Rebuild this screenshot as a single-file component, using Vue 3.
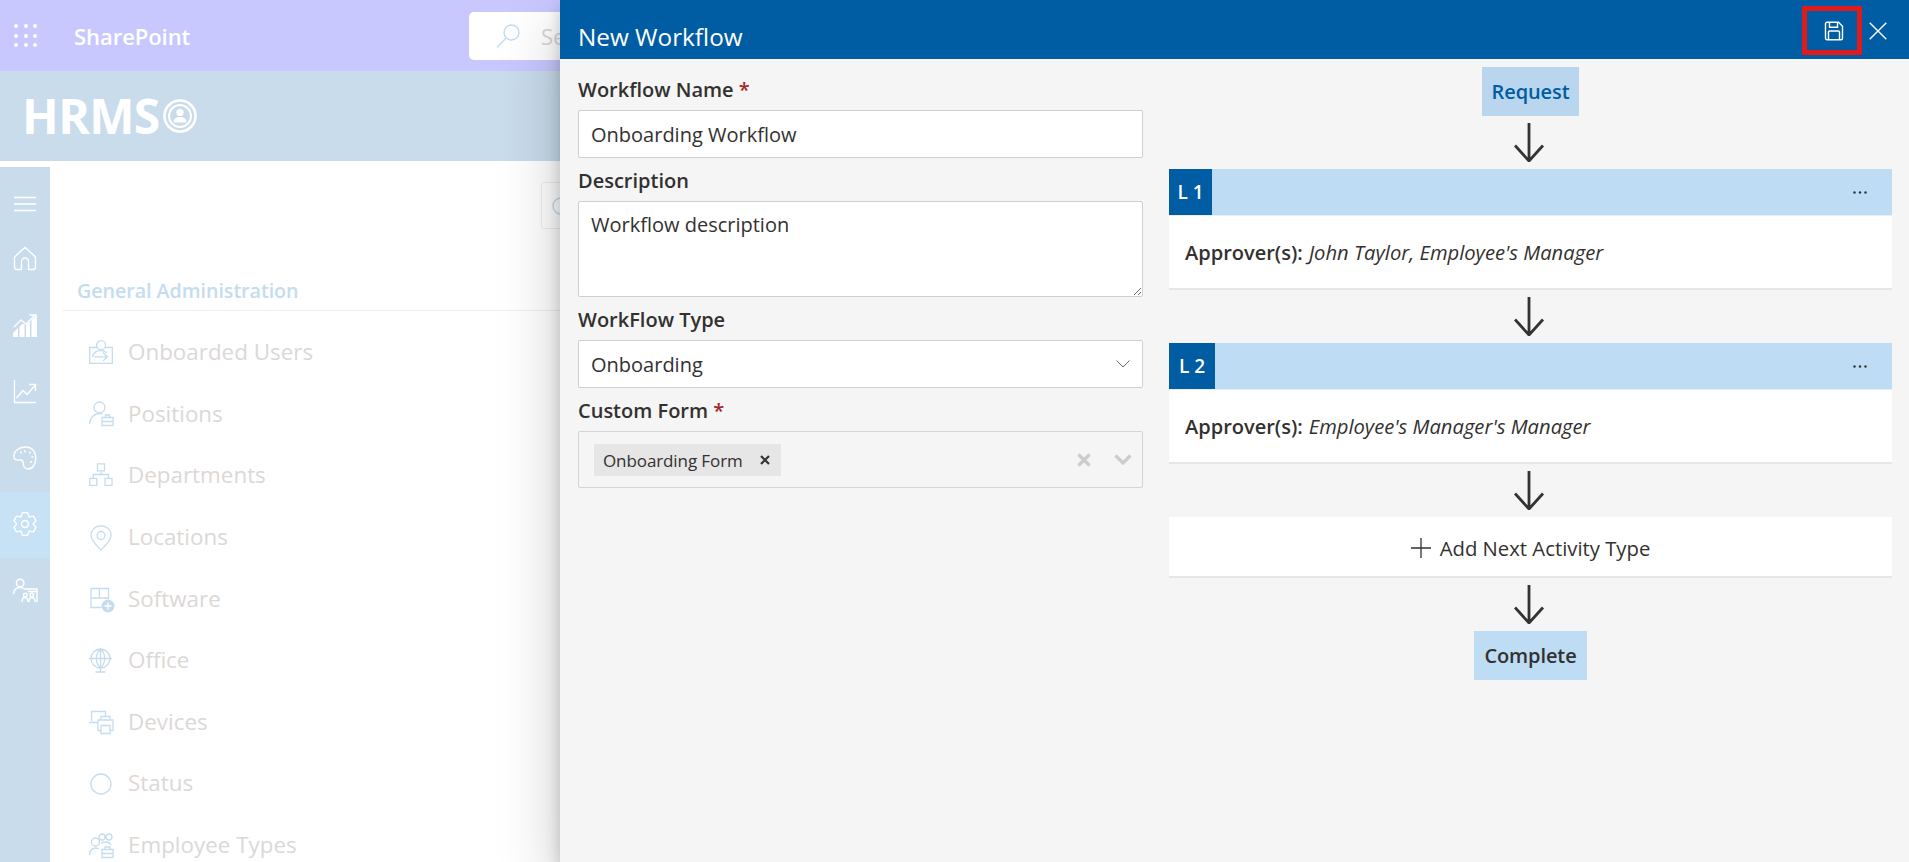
<template>
  <div class="page">
    <header class="suite-bar">
      <div class="waffle">
        <span v-for="n in 9" :key="n" class="waffle-dot"></span>
      </div>
      <span class="suite-name">SharePoint</span>
      <div class="suite-search">
        <svg class="suite-search-icon" viewBox="0 0 24 24" fill="none">
          <circle cx="15.5" cy="8.5" r="7.5" />
          <path d="M10 14 1 23.5" />
        </svg>
        <span class="suite-search-text">Se</span>
      </div>
    </header>

    <div class="brand">
      <span class="brand-name">HRMS</span>
      <svg class="brand-icon" viewBox="0 0 34 34">
        <circle cx="17" cy="17" r="15.5" fill="none" stroke="#fff" stroke-width="2.6" />
        <circle cx="17" cy="17" r="11" fill="none" stroke="#fff" stroke-width="2" />
        <circle cx="17" cy="13.5" r="3.6" fill="#fff" />
        <path d="M10.5 23.5c0-4 3-5.5 6.5-5.5s6.5 1.500 6.500 5.500z" fill="#fff" />
      </svg>
    </div>

    <div class="main">
      <nav class="rail">
        <div class="rail-menu">
          <svg class="rail-icon" viewBox="0 0 24 24" fill="none">
            <path d="M1 5.500H23M1 12H23M1 18.500H23" />
          </svg>
        </div>
        <div
          v-for="item in railItems"
          :key="item.name"
          class="rail-item"
          :class="{ active: item.name === 'settings' }"
        >
          <svg class="rail-icon" viewBox="0 0 24 24" fill="none">
            <path :d="item.d" />
            <path v-if="item.fill" class="solid" :d="item.fill" />
          </svg>
        </div>
      </nav>

      <div class="content">
        <div class="content-search">
          <svg class="content-search-icon" viewBox="0 0 20 20" fill="none">
            <circle cx="10" cy="10" r="8" />
          </svg>
        </div>
        <h2 class="section-title">General Administration</h2>
        <ul class="admin-list">
          <li v-for="item in adminItems" :key="item.label" class="admin-item">
            <svg class="admin-icon" viewBox="0 0 24 24" fill="none">
              <path :d="item.d" />
              <path v-if="item.fill" class="solid" :d="item.fill" />
              <path v-if="item.plus" class="plus" :d="item.plus" />
            </svg>
            <span>{{ item.label }}</span>
          </li>
        </ul>
      </div>
    </div>

    <aside class="panel">
      <div class="panel-header">
        <span class="panel-title">New Workflow</span>
        <div class="panel-actions">
          <button class="save-btn" type="button" aria-label="Save">
            <svg viewBox="0 0 20 20" fill="none">
              <path d="M1.500 2.800a1.500 1.500 0 0 1 1.500-1.500h11.500l4 4v12a1.500 1.500 0 0 1-1.500 1.500H3a1.500 1.500 0 0 1-1.500-1.500z" />
              <path d="M5.500 1.500v4.800h8V1.500M4.500 18.500v-7.500a1 1 0 0 1 1-1h9a1 1 0 0 1 1 1v7.500" />
            </svg>
          </button>
          <button class="close-btn" type="button" aria-label="Close">
            <svg viewBox="0 0 18 18" fill="none">
              <path d="M.7.700 17.300 17.300M17.300.700.7 17.300" />
            </svg>
          </button>
        </div>
      </div>

      <div class="panel-body">
        <form class="form" @submit.prevent>
          <div class="field">
            <label>Workflow Name <span class="req">*</span></label>
            <input v-model="workflowName" class="control" type="text" />
          </div>
          <div class="field">
            <label>Description</label>
            <textarea v-model="description" class="control area"></textarea>
          </div>
          <div class="field">
            <label>WorkFlow Type</label>
            <div class="control select">
              <span>Onboarding</span>
              <svg class="chevron" viewBox="0 0 14 8" fill="none">
                <path d="M.5.500 7 7 13.500.500" />
              </svg>
            </div>
          </div>
          <div class="field">
            <label>Custom Form <span class="req">*</span></label>
            <div class="multi">
              <span class="tag">
                Onboarding Form
                <svg class="tag-x" viewBox="0 0 10 10" fill="none">
                  <path d="M1 1 9 9M9 1 1 9" />
                </svg>
              </span>
              <svg class="multi-clear" viewBox="0 0 14 14" fill="none">
                <path d="M1.500 1.500 12.500 12.500M12.500 1.500 1.500 12.500" />
              </svg>
              <svg class="multi-chevron" viewBox="0 0 18 11" fill="none">
                <path d="M1.500 1.500 9 9 16.500 1.500" />
              </svg>
            </div>
          </div>
        </form>

        <div class="flow">
          <div class="node request">Request</div>
          <template v-for="level in levels" :key="level.code">
            <svg class="arrow" viewBox="0 0 33 39" fill="none">
              <path d="M15 0V37.500M1 22.500 15 38 29 22.500" />
            </svg>
            <div class="level">
              <div class="level-head">
                <span class="level-code" :style="{ width: level.badge + 'px' }">{{ level.code }}</span>
                <svg class="more" viewBox="0 0 14 3">
                  <circle cx="1.500" cy="1.500" r="1.200" />
                  <circle cx="7" cy="1.500" r="1.200" />
                  <circle cx="12.500" cy="1.500" r="1.200" />
                </svg>
              </div>
              <div class="level-body">
                <strong>Approver(s):</strong> <em>{{ level.approvers }}</em>
              </div>
            </div>
          </template>
          <svg class="arrow" viewBox="0 0 33 39" fill="none">
            <path d="M15 0V37.500M1 22.500 15 38 29 22.500" />
          </svg>
          <div class="add-next">
            <svg viewBox="0 0 20 20" fill="none">
              <path d="M10 0V20M0 10H20" />
            </svg>
            <span>Add Next Activity Type</span>
          </div>
          <svg class="arrow" viewBox="0 0 33 39" fill="none">
            <path d="M15 0V37.500M1 22.500 15 38 29 22.500" />
          </svg>
          <div class="node complete">Complete</div>
        </div>
      </div>
    </aside>
  </div>
</template>

<script setup>
import { ref } from 'vue'

const workflowName = ref('Onboarding Workflow')
const description = ref('Workflow description')

const levels = [
  { code: 'L 1', badge: 43, approvers: "John Taylor, Employee's Manager" },
  { code: 'L 2', badge: 46, approvers: "Employee's Manager's Manager" }
]

// six toothed outline for the settings icon
const gearPath = () => {
  const pts = []
  for (let k = 0; k < 6; k++) {
    const a = k * 60 - 90
    for (const [off, r] of [[-30, 8.2], [-13, 11.5], [13, 11.5]]) {
      const rad = ((a + off) * Math.PI) / 180
      pts.push((12 + r * Math.cos(rad)).toFixed(2) + ' ' + (12 + r * Math.sin(rad)).toFixed(2))
    }
  }
  return 'M' + pts.join('L') + 'Z'
}

const railItems = [
  { name: 'home', d: 'M1.500 9 12 -.7l10.500 9.700v10a2.500 2.500 0 0 1-2.500 2.500h-4.500v-8a3.500 3.500 0 0 0-7 0v8H4a2.500 2.500 0 0 1-2.500-2.500z' },
  {
    name: 'reports',
    d: 'M1 13 8 6l5 4 9-9M16.500 1H23v6.500',
    fill: 'M0 23v-4l5-5v9zM6.500 23V12.500L10 9.500l1.500 1V23zM13 23V11l4-3.500V23zM18.500 23V6L24 1v22z'
  },
  { name: 'analytics', d: 'M1.500 0V22.500H23M3.500 18 10 10.500l4 4 8-9M16 4.500h6.500V11' },
  {
    name: 'themes',
    d: 'M12.500 1C6 1 .8 5 .8 10.500c0 3.500 3 3.800 5 3.500 3-.5 4.500 1 4.500 3.500 0 3 2 5.500 5 5.500 4.500 0 7.500-5 7.500-11S19.500 1 12.500 1z',
    fill: 'M11 4.500h1.800v1.800H11zM16 5.800h1.800v1.800H16zM18.500 10h1.800v1.800h-1.800zM17 15h1.800v1.800H17zM7 5.500h1.800v1.800H7z'
  },
  { name: 'settings', d: gearPath() + 'M15.500 12a3.500 3.500 0 1 1-7 0a3.500 3.500 0 1 1 7 0z' },
  {
    name: 'people',
    d: 'M11 5a3.800 3.800 0 1 1-7.600 0a3.800 3.800 0 1 1 7.600 0zM.5 16c.5-4 3-6.500 6.500-6.500 1.500 0 3 .5 4.500 1.500H24v12.500h-1M9 24c0-3 1-4.500 3-4.500s3 1.500 3 4.500M16 24c0-3 1-4.500 3-4.500s3 1.500 3 4.500M10.500 17a1.800 1.800 0 1 0 3.600 0a1.800 1.800 0 1 0-3.600 0M17 17a1.800 1.800 0 1 0 3.600 0a1.800 1.800 0 1 0-3.600 0M15 13.500h9'
  }
]

const adminItems = [
  {
    label: 'Onboarded Users',
    d: 'M7.500 7.500H.7V23.300H23.300V7.500H16.500M12 .7a4.500 4.500 0 1 0 0 9a4.500 4.500 0 0 0 0-9zM3.500 17c1-4.500 4-6.500 8.500-6.500 2.500 0 4.500 1 6 2.500M5.500 16.800H18M14 12.500l4.300 4.300-4.300 4.300'
  },
  {
    label: 'Positions',
    d: 'M16 6.500a5.500 5.500 0 1 1-11 0a5.500 5.500 0 1 1 11 0zM.5 23c.5-6 4.500-10.500 10-10.500 1 0 2 .2 3 .5M13 16.500H24V24.500H13zM16.500 16.500V14h4v2.500M13 20.500H24'
  },
  {
    label: 'Departments',
    d: 'M8.500.8H15.500V7.800H8.500zM.8 15.300H7.800V22.300H.8zM16 15.300H23V22.300H16zM12 7.800V11.500M4.300 15.300V11.500H19.500V15.300'
  },
  {
    label: 'Locations',
    d: 'M12 .8C6 .8 2 5 2 10.500c0 5 5.500 10 10 14.500 4.500-4.500 10-9.500 10-14.500C22 5 18 .8 12 .8zM16 10.500a4 4 0 1 1-8 0a4 4 0 1 1 8 0z'
  },
  {
    label: 'Software',
    d: 'M19.500 13V2.500H2V21.500H12.500M2 12H19.500M10.500 2.500V12',
    fill: 'M25.500 20a6.500 6.500 0 1 1-13 0a6.500 6.500 0 1 1 13 0z',
    plus: 'M19 16.500V23.500M15.500 20H22.500'
  },
  {
    label: 'Office',
    d: 'M21 10.500a9.500 9.500 0 1 1-19 0a9.500 9.500 0 1 1 19 0zM11.500 0V24M0 10.500H23M11.500 1C6 6 6 15 11.500 20M11.500 1C17 6 17 15 11.500 20M6.500 24H16.500'
  },
  {
    label: 'Devices',
    d: 'M2.500 12V2.500H16.500V7M0 13.500H9.500M12 11V7.500H21V11M9 21.500V11H24V21.500H21M12 16.500H21V24.500H12zM9 21.500H12'
  },
  {
    label: 'Status',
    d: 'M22 13a10 10 0 1 1-20 0a10 10 0 1 1 20 0z'
  },
  {
    label: 'Employee Types',
    d: 'M10.500 9a4 4 0 1 1-8 0a4 4 0 1 1 8 0zM.5 22c.3-4 2.500-7 6-7 1 0 2 .3 3 .8M16 4a3 3 0 1 1-6 0a3 3 0 1 1 6 0zM23 4a3 3 0 1 1-6 0a3 3 0 1 1 6 0zM13 16.500H24V24.500H13zM16 16.500V14h5v2.500M13 20.500H24M12.500 10.500c.5-1 2-1.500 4.500-1.500s4 1 5 3'
  }
]
</script>

<style>
html,
body {
  margin: 0;
  padding: 0;
  overflow: hidden;
}
</style>

<style scoped>
.page {
  position: relative;
  width: 100%;
  height: 100vh;
  overflow: hidden;
  background: #fff;
  font-family: "Open Sans", "Noto Sans", sans-serif;
  color: #323130;
}

/* suite bar */
.suite-bar {
  display: flex;
  align-items: center;
  height: 71px;
  background: #c8c8ff;
}

.waffle {
  display: grid;
  grid-template-columns: repeat(3, 4px);
  gap: 5.5px;
  margin-left: 14px;
  width: 24px;
}

.waffle-dot {
  width: 4px;
  height: 4px;
  border-radius: 50%;
  background: #fff;
}

.suite-name {
  flex: 0 0 118px;
  margin: 1px 0 0 36px;
  font-size: 22px;
  font-weight: 600;
  letter-spacing: -0.05px;
  white-space: nowrap;
  color: #fff;
}

.suite-search {
  flex: none;
  display: flex;
  align-items: center;
  box-sizing: border-box;
  width: 91px;
  height: 48px;
  margin-left: 277px;
  padding-left: 27px;
  overflow: hidden;
  border-radius: 5px 0 0 5px;
  background: #fff;
}

.suite-search-icon {
  flex: none;
  width: 24px;
  height: 24px;
  stroke: #c5dcef;
  stroke-width: 1.4;
}

.suite-search-text {
  margin-left: 21px;
  font-size: 22px;
  color: #d8d4d2;
}

/* site header */
.brand {
  display: flex;
  align-items: center;
  height: 90px;
  padding-left: 22px;
  background: #c9dcec;
}

.brand-name {
  font-size: 48px;
  font-weight: 700;
  letter-spacing: -0.6px;
  line-height: 1;
  color: #fff;
}

.brand-icon {
  width: 34px;
  height: 34px;
  margin-left: 3px;
}

.main {
  display: flex;
  height: calc(100vh - 161px);
}

/* left rail */
.rail {
  flex: 0 0 50px;
  margin-top: 6px;
  padding-top: 10px;
  background: #c9dcec;
}

.rail-menu,
.rail-item {
  display: flex;
  align-items: center;
  justify-content: center;
}

.rail-menu {
  height: 51px;
}

.rail-menu .rail-icon {
  margin-top: 3px;
}

.rail-item {
  height: 66px;
}

.rail-item .rail-icon {
  margin-bottom: 2px;
}

.rail-item.active {
  background: #c7e1f5;
}

.rail-icon {
  width: 24px;
  height: 24px;
  overflow: visible;
  stroke: #fff;
  stroke-width: 1.4;
  stroke-linejoin: round;
}

.rail-icon .solid {
  fill: #fff;
  stroke: none;
}

/* page behind the panel */
.content {
  flex: 1;
  min-width: 0;
  margin-top: 6px;
  padding: 15px 0 0 12px;
}

.content-search {
  display: flex;
  align-items: center;
  width: 300px;
  height: 45px;
  margin-left: 479px;
  padding-left: 9px;
  border: 1px solid #eeeeee;
  border-radius: 3px;
}

.content-search-icon {
  width: 20px;
  height: 20px;
  stroke: #c5dcef;
  stroke-width: 1.5;
}

.section-title {
  margin: 45px 0 0;
  padding: 0 0 3px 15px;
  border-bottom: 1px solid #f0f0f0;
  font-size: 19.700px;
  font-weight: 600;
  line-height: 33px;
  letter-spacing: -0.05px;
  color: #c5dcef;
}

.admin-list {
  margin: 0;
  padding: 10px 0 0 27px;
  list-style: none;
}

.admin-item {
  display: flex;
  align-items: center;
  gap: 15px;
  height: 61.600px;
  font-size: 22.400px;
  color: #dcd8d6;
}

.admin-icon {
  flex: 0 0 24px;
  width: 24px;
  height: 24px;
  overflow: visible;
  stroke: #c5dcef;
  stroke-width: 1.3;
}

.admin-icon .solid {
  fill: #c5dcef;
  stroke: none;
}

.admin-icon .plus {
  stroke: #fff;
}

/* workflow panel */
.panel {
  position: absolute;
  top: 0;
  right: 0;
  bottom: 0;
  left: 560px;
  background: #f5f5f5;
  box-shadow: 0 25.600px 57.600px 0 rgba(0, 0, 0, 0.22), 0 4.800px 14.400px 0 rgba(0, 0, 0, 0.18);
}

.panel-header {
  display: flex;
  align-items: center;
  justify-content: space-between;
  height: 59px;
  padding: 0 15px 0 18px;
  background: #005ca3;
}

.panel-title {
  margin-top: 13px;
  font-size: 24.300px;
  color: #fff;
}

.panel-actions {
  display: flex;
  align-items: center;
  padding-top: 2px;
}

.save-btn,
.close-btn {
  display: flex;
  align-items: center;
  justify-content: center;
  padding: 0;
  background: none;
  cursor: pointer;
}

.save-btn {
  width: 60px;
  height: 49px;
  border: 5px solid #e01b1b;
}

.save-btn svg {
  width: 20px;
  height: 20px;
  margin-left: 4px;
  stroke: #fff;
  stroke-width: 1.4;
}

.close-btn {
  width: 32px;
  height: 49px;
  border: none;
}

.close-btn svg {
  width: 18px;
  height: 18px;
  stroke: #fff;
  stroke-width: 1.400;
}

.panel-body {
  display: flex;
  gap: 26px;
  padding: 0 17px 0 18px;
}

.form {
  flex: 0 0 565px;
  padding-top: 19px;
}

.field {
  margin-bottom: 11px;
}

.field label {
  display: block;
  height: 24px;
  margin-bottom: 8px;
  font-size: 20px;
  font-weight: 600;
  line-height: 24px;
}

.req {
  color: #a4262c;
}

.control {
  display: block;
  box-sizing: border-box;
  width: 100%;
  height: 48px;
  padding: 1px 12px 0;
  border: 1.500px solid #cfcfcf;
  border-radius: 2px;
  outline: none;
  background: #fff;
  font-family: inherit;
  font-size: 20px;
  color: #323130;
}

.area {
  height: 96px;
  padding-top: 10px;
  line-height: 26px;
}

.select {
  display: flex;
  align-items: center;
  justify-content: space-between;
  padding-top: 0;
}

.chevron {
  width: 14px;
  height: 8px;
  stroke: #666;
  stroke-width: 1;
}

.multi {
  display: flex;
  align-items: center;
  box-sizing: border-box;
  height: 57px;
  padding: 0 10px 0 15px;
  border: 1.500px solid #d4d4d4;
  border-radius: 2px;
}

.tag {
  display: flex;
  align-items: center;
  justify-content: space-between;
  box-sizing: border-box;
  width: 187px;
  height: 32px;
  padding: 1px 11px 0 9px;
  border-radius: 2px;
  background: #e6e6e6;
  font-size: 17px;
  letter-spacing: -0.1px;
}

.tag-x {
  width: 10px;
  height: 10px;
  stroke: #333;
  stroke-width: 2.200;
}

.multi-clear {
  width: 14px;
  height: 14px;
  margin-left: auto;
  margin-right: 1px;
  stroke: #cccccc;
  stroke-width: 3.200;
}

.multi-chevron {
  width: 18px;
  height: 11px;
  margin-left: 22px;
  stroke: #cccccc;
  stroke-width: 3.200;
}

/* flow */
.flow {
  flex: 1;
  min-width: 0;
  display: flex;
  flex-direction: column;
  align-items: center;
  padding-top: 8px;
}

.node {
  display: flex;
  align-items: center;
  justify-content: center;
  height: 49px;
  font-size: 20px;
  font-weight: 600;
  letter-spacing: -0.1px;
}

.request {
  width: 97px;
  background: #b9d6ee;
  color: #005ca3;
}

.complete {
  width: 113px;
  background: #bedcf4;
}

.arrow {
  flex: none;
  width: 33px;
  height: 39px;
  margin: 7px 0;
  stroke: #333;
  stroke-width: 2.800;
}

.level {
  align-self: stretch;
}

.level-head {
  display: flex;
  align-items: center;
  justify-content: space-between;
  height: 46px;
  padding-right: 25px;
  background: #bedcf4;
}

.level-code {
  display: flex;
  align-items: center;
  justify-content: center;
  align-self: stretch;
  background: #005ca3;
  font-size: 19px;
  font-weight: 600;
  color: #fff;
}

.more {
  width: 14px;
  height: 3px;
  fill: #333;
}

.level-body {
  display: flex;
  align-items: center;
  gap: 6px;
  box-sizing: border-box;
  height: 75px;
  padding-left: 16px;
  border-top: 1px solid #e8eef2;
  border-bottom: 2px solid #e6e6e6;
  background: #fff;
  font-size: 20.200px;
}

.level-body strong {
  font-size: 20px;
  font-weight: 600;
}

.add-next {
  align-self: stretch;
  display: flex;
  align-items: center;
  justify-content: center;
  gap: 9px;
  box-sizing: border-box;
  height: 61px;
  padding-top: 2px;
  border-bottom: 2px solid #e6e6e6;
  background: #fff;
  font-size: 20.300px;
}

.add-next svg {
  width: 20px;
  height: 20px;
  stroke: #323130;
  stroke-width: 1.300;
}
</style>
